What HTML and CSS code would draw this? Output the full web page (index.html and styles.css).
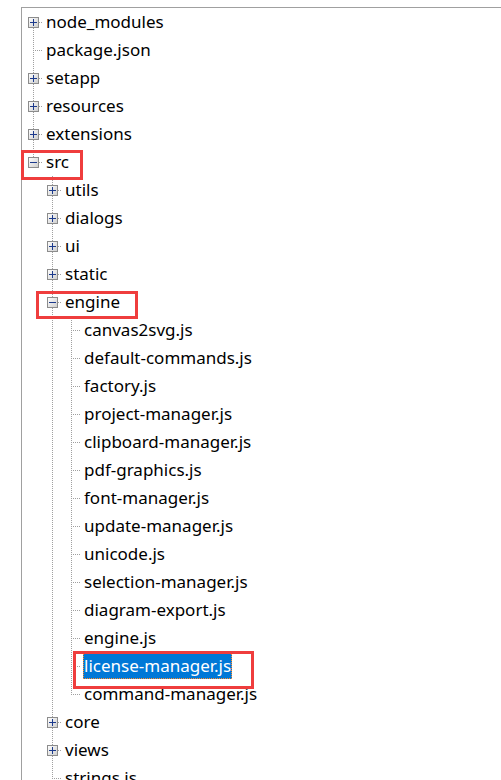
FILE: index.html
```html
<!DOCTYPE html>
<html>
<head>
<meta charset="utf-8">
<link rel="stylesheet" href="styles.css">
</head>
<body>
<div class="tree">
  <div class="row"><span class="cell first"><svg class="exp" width="11" height="11"><use href="#plus"/></svg></span><span class="label">node_modules</span></div>
  <div class="row"><span class="cell tee"></span><span class="label">package.json</span></div>
  <div class="row"><span class="cell tee"><svg class="exp" width="11" height="11"><use href="#plus"/></svg></span><span class="label">setapp</span></div>
  <div class="row"><span class="cell tee"><svg class="exp" width="11" height="11"><use href="#plus"/></svg></span><span class="label">resources</span></div>
  <div class="row"><span class="cell tee"><svg class="exp" width="11" height="11"><use href="#plus"/></svg></span><span class="label">extensions</span></div>
  <div class="row"><span class="cell elbow"><svg class="exp" width="11" height="11"><use href="#minus"/></svg></span><span class="label">src</span></div>
  <div class="row"><span class="cell"></span><span class="cell tee"><svg class="exp" width="11" height="11"><use href="#plus"/></svg></span><span class="label">utils</span></div>
  <div class="row"><span class="cell"></span><span class="cell tee"><svg class="exp" width="11" height="11"><use href="#plus"/></svg></span><span class="label">dialogs</span></div>
  <div class="row"><span class="cell"></span><span class="cell tee"><svg class="exp" width="11" height="11"><use href="#plus"/></svg></span><span class="label">ui</span></div>
  <div class="row"><span class="cell"></span><span class="cell tee"><svg class="exp" width="11" height="11"><use href="#plus"/></svg></span><span class="label">static</span></div>
  <div class="row"><span class="cell"></span><span class="cell tee"><svg class="exp" width="11" height="11"><use href="#minus"/></svg></span><span class="label">engine</span></div>
  <div class="row"><span class="cell"></span><span class="cell pipe"></span><span class="cell tee"></span><span class="label">canvas2svg.js</span></div>
  <div class="row"><span class="cell"></span><span class="cell pipe"></span><span class="cell tee"></span><span class="label">default-commands.js</span></div>
  <div class="row"><span class="cell"></span><span class="cell pipe"></span><span class="cell tee"></span><span class="label">factory.js</span></div>
  <div class="row"><span class="cell"></span><span class="cell pipe"></span><span class="cell tee"></span><span class="label">project-manager.js</span></div>
  <div class="row"><span class="cell"></span><span class="cell pipe"></span><span class="cell tee"></span><span class="label">clipboard-manager.js</span></div>
  <div class="row"><span class="cell"></span><span class="cell pipe"></span><span class="cell tee"></span><span class="label">pdf-graphics.js</span></div>
  <div class="row"><span class="cell"></span><span class="cell pipe"></span><span class="cell tee"></span><span class="label">font-manager.js</span></div>
  <div class="row"><span class="cell"></span><span class="cell pipe"></span><span class="cell tee"></span><span class="label">update-manager.js</span></div>
  <div class="row"><span class="cell"></span><span class="cell pipe"></span><span class="cell tee"></span><span class="label">unicode.js</span></div>
  <div class="row"><span class="cell"></span><span class="cell pipe"></span><span class="cell tee"></span><span class="label">selection-manager.js</span></div>
  <div class="row"><span class="cell"></span><span class="cell pipe"></span><span class="cell tee"></span><span class="label">diagram-export.js</span></div>
  <div class="row"><span class="cell"></span><span class="cell pipe"></span><span class="cell tee"></span><span class="label">engine.js</span></div>
  <div class="row"><span class="cell"></span><span class="cell pipe"></span><span class="cell tee"></span><span class="label selected">license-manager.js</span></div>
  <div class="row"><span class="cell"></span><span class="cell pipe"></span><span class="cell elbow"></span><span class="label">command-manager.js</span></div>
  <div class="row"><span class="cell"></span><span class="cell tee"><svg class="exp" width="11" height="11"><use href="#plus"/></svg></span><span class="label">core</span></div>
  <div class="row"><span class="cell"></span><span class="cell tee"><svg class="exp" width="11" height="11"><use href="#plus"/></svg></span><span class="label">views</span></div>
  <div class="row"><span class="cell"></span><span class="cell tee"></span><span class="label">strings.js</span></div>
</div>

<div class="mark mark-src"></div>
<div class="mark mark-engine"></div>
<div class="mark mark-license"></div>

<svg class="defs" width="0" height="0">
  <defs>
    <linearGradient id="boxfill" x1="0" y1="0" x2="1" y2="1">
      <stop offset="0" stop-color="#ffffff"/>
      <stop offset="1" stop-color="#cdcdcd"/>
    </linearGradient>
    <g id="plus">
      <rect x="0.5" y="0.5" width="10" height="10" fill="url(#boxfill)" stroke="#8c8c8c"/>
      <path d="M2 5.5h7M5.5 2v7" stroke="#1c3a8c" stroke-width="1"/>
    </g>
    <g id="minus">
      <rect x="0.5" y="0.5" width="10" height="10" fill="url(#boxfill)" stroke="#8c8c8c"/>
      <path d="M2 5.5h7" stroke="#1c3a8c" stroke-width="1"/>
    </g>
  </defs>
</svg>
</body>
</html>
```
FILE: styles.css
```css
html, body {
  margin: 0;
  padding: 0;
  background: #ffffff;
}

body {
  width: 501px;
  height: 780px;
  overflow: hidden;
  position: relative;
  font-family: "Noto Sans", "Open Sans", sans-serif;
  font-size: 17px;
  color: #000000;
}

.tree {
  margin: 7px 0 0 21px;
  border-top: 1px solid #a0a0a0;
  border-left: 1px solid #a0a0a0;
  padding-left: 2px;
  height: 800px;
}

.row {
  display: flex;
  align-items: flex-start;
  height: 28px;
}

.cell {
  flex: 0 0 19px;
  width: 19px;
  height: 28px;
  display: flex;
  align-items: flex-start;
  background-repeat: no-repeat;
}

.pipe {
  background-image: repeating-linear-gradient(to bottom, #a0a0a0 0 1px, transparent 1px 2px);
  background-size: 1px 28px;
  background-position: 9px 0;
}

.tee {
  background-image:
    repeating-linear-gradient(to bottom, #a0a0a0 0 1px, transparent 1px 2px),
    repeating-linear-gradient(to right, #a0a0a0 0 1px, transparent 1px 2px);
  background-size: 1px 28px, 10px 1px;
  background-position: 9px 0, 9px 14px;
}

.elbow {
  background-image:
    repeating-linear-gradient(to bottom, #a0a0a0 0 1px, transparent 1px 2px),
    repeating-linear-gradient(to right, #a0a0a0 0 1px, transparent 1px 2px);
  background-size: 1px 15px, 10px 1px;
  background-position: 9px 0, 9px 14px;
}

.first {
  background-image:
    repeating-linear-gradient(to bottom, #a0a0a0 0 1px, transparent 1px 2px),
    repeating-linear-gradient(to right, #a0a0a0 0 1px, transparent 1px 2px);
  background-size: 1px 14px, 10px 1px;
  background-position: 9px 14px, 9px 14px;
}

.exp {
  display: block;
  margin: 9px 0 0 4px;
}

.label {
  margin: 1px 0 0 2px;
  padding: 0 1px;
  height: 26px;
  line-height: 26px;
  white-space: nowrap;
}

.selected {
  background: #0078d7;
  color: #ffffff;
  outline: 1px dotted #ff8c28;
  outline-offset: -1px;
}

.mark {
  position: absolute;
  box-sizing: border-box;
  border: 3px solid #ef3d3d;
}

.mark-src {
  left: 21px;
  top: 150px;
  width: 62px;
  height: 30px;
}

.mark-engine {
  left: 36px;
  top: 291px;
  width: 102px;
  height: 28px;
}

.mark-license {
  left: 73px;
  top: 651px;
  width: 181px;
  height: 38px;
}

.defs {
  position: absolute;
  width: 0;
  height: 0;
}
```
